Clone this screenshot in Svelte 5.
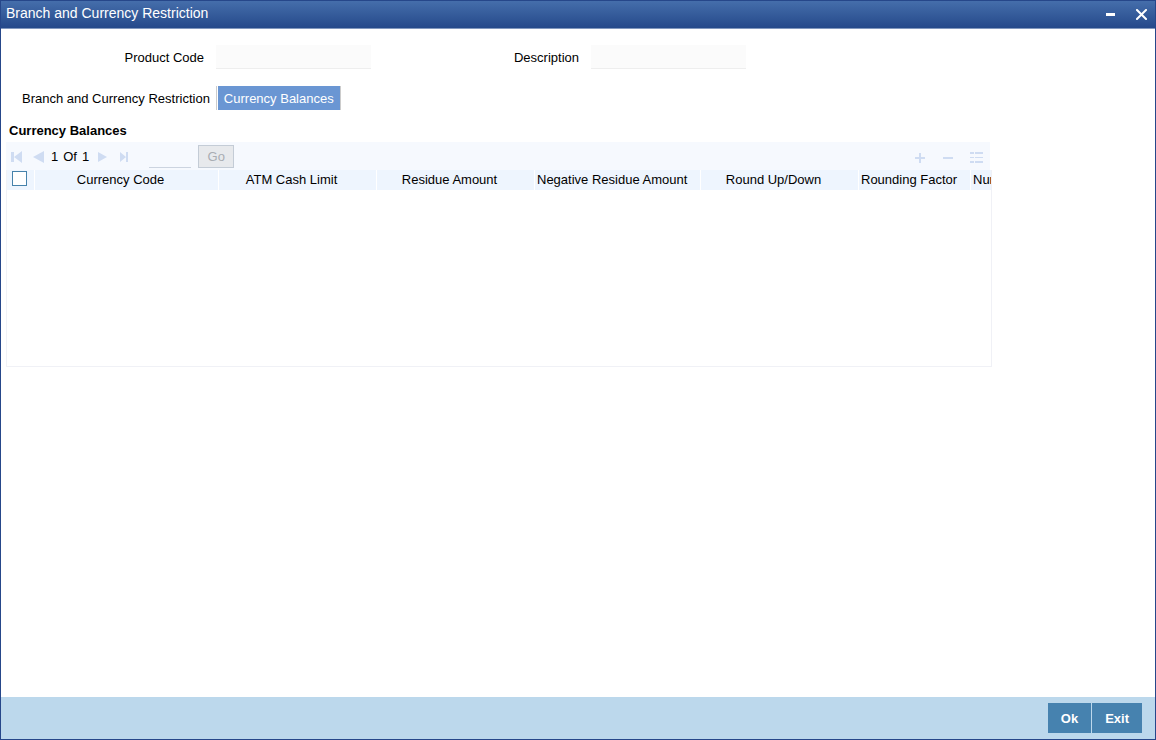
<script>
  const columns = [
    { name: 'Currency Code', width: 184 },
    { name: 'ATM Cash Limit', width: 158 },
    { name: 'Residue Amount', width: 158 },
    { name: 'Negative Residue Amount', width: 166 },
    { name: 'Round Up/Down', width: 158 },
    { name: 'Rounding Factor', width: 112 },
    { name: 'Num', width: 60 }
  ];
</script>

<div class="window">
  <header class="titlebar">
    <h1>Branch and Currency Restriction</h1>
    <div class="window-actions">
      <button type="button" aria-label="Minimize">
        <svg width="11" height="11" viewBox="0 0 11 11"><path d="M1 4h9v3H1z" fill="#fff" /></svg>
      </button>
      <button type="button" aria-label="Close">
        <svg width="11" height="11" viewBox="0 0 11 11"><path d="M1 1l9 9M10 1l-9 9" stroke="#fff" stroke-width="2" stroke-linecap="square" fill="none" /></svg>
      </button>
    </div>
  </header>

  <main>
    <div class="fields">
      <label for="product-code">Product Code</label>
      <input id="product-code" type="text" readonly />
      <label for="description">Description</label>
      <input id="description" type="text" readonly />
    </div>

    <nav class="tabs">
      <a href="#restriction">Branch and Currency Restriction</a>
      <a href="#balances" class="active">Currency Balances</a>
    </nav>

    <section class="balances">
      <h2>Currency Balances</h2>
      <div class="toolbar">
        <button type="button" class="icon" aria-label="First page">
          <svg width="12" height="12" viewBox="0 0 12 12"><path d="M1 1h3v10H1zM12 0v12L4 6z" /></svg>
        </button>
        <button type="button" class="icon" aria-label="Previous page">
          <svg width="12" height="12" viewBox="0 0 12 12"><path d="M12 0v12L1 6z" /></svg>
        </button>
        <span class="page"><span>1</span><span>Of</span><span>1</span></span>
        <button type="button" class="icon" aria-label="Next page">
          <svg width="12" height="12" viewBox="0 0 12 12"><path d="M1 1v10l9-5z" /></svg>
        </button>
        <button type="button" class="icon last" aria-label="Last page">
          <svg width="12" height="12" viewBox="0 0 12 12"><path d="M1 1v10l6-5zM7 1h2v10H7z" /></svg>
        </button>
        <input type="text" class="goto" aria-label="Page number" />
        <button type="button" class="go" disabled>Go</button>
        <div class="row-actions">
          <button type="button" class="icon" aria-label="Add row">
            <svg width="14" height="14" viewBox="0 0 14 14"><path d="M6 3h2v4h4v2H8v4H6V9H2V7h4z" /></svg>
          </button>
          <button type="button" class="icon" aria-label="Remove row">
            <svg width="14" height="14" viewBox="0 0 14 14"><path d="M2 7h10v2H2z" /></svg>
          </button>
          <button type="button" class="icon" aria-label="Single record view">
            <svg width="14" height="14" viewBox="0 0 14 14"><path d="M1 2h4v2H1zM6 2h8v2H6zM1 7h4v1H1zM6 7h8v1H6zM1 11h4v2H1zM6 11h8v2H6z" /></svg>
          </button>
        </div>
      </div>
      <div class="grid">
        <table>
          <colgroup>
            <col class="select-col" />
            {#each columns as column}
              <col style="width: {column.width}px" />
            {/each}
          </colgroup>
          <thead>
            <tr>
              <th class="select"><input type="checkbox" aria-label="Select all" /></th>
              {#each columns as column}
                <th scope="col">{column.name}</th>
              {/each}
            </tr>
          </thead>
        </table>
      </div>
    </section>
  </main>

  <footer>
    <button type="button">Ok</button>
    <button type="button">Exit</button>
  </footer>
</div>

<style>
  :global(body) {
    margin: 0;
    background: #fff;
  }
  .window, .window :where(*) {
    box-sizing: border-box;
  }
  .window {
    display: flex;
    flex-direction: column;
    min-height: 100vh;
    border: 1px solid #26478a;
    font: 13px/16px "Liberation Sans", Arial, sans-serif;
    color: #000;
  }
  button, input {
    margin: 0;
    padding: 0;
    border: 0;
    border-radius: 0;
    background: none;
    font: inherit;
    color: inherit;
  }
  svg {
    display: block;
  }
  .titlebar {
    display: flex;
    justify-content: space-between;
    height: 28px;
    padding: 0 8px 0 5px;
    border-bottom: 1px solid #8197bd;
    background: linear-gradient(#456eab, #25498a);
    color: #fff;
  }
  h1 {
    margin: 0;
    font-size: 14px;
    font-weight: 400;
    line-height: 25px;
  }
  .window-actions {
    display: flex;
    align-items: center;
    gap: 20px;
  }
  main {
    flex: 1;
    padding: 16px 0 0 5px;
  }
  .fields {
    display: grid;
    grid-template-columns: 198px 155px 196px 155px;
    column-gap: 12px;
    align-items: center;
  }
  .fields label {
    padding-top: 2px;
    text-align: right;
  }
  .fields input {
    height: 24px;
    background: #fbfbfb;
    border-bottom: 1px solid #eee;
  }
  .tabs {
    display: flex;
    margin-top: 17px;
    padding-left: 10px;
    line-height: 22px;
  }
  .tabs a {
    padding: 2px 6px 0;
    border-right: 1px solid #ccc;
    color: #000;
    text-decoration: none;
  }
  .tabs .active {
    margin-left: 1px;
    background: #6a96d3;
    color: #fff;
  }
  .balances {
    margin: 13px 163px 0 0;
  }
  h2 {
    margin: 0;
    padding-left: 3px;
    font-size: 13px;
    line-height: 16px;
  }
  .toolbar {
    display: flex;
    align-items: center;
    height: 28px;
    margin: 3px 2px 0 0;
    padding: 3px 7px 1px 4px;
    background: #f6f9fe;
  }
  .icon {
    margin-right: 10px;
    fill: #cfdcf2;
  }
  .page {
    display: flex;
    gap: 5px;
    margin: 0 8px 0 -3px;
  }
  .icon.last {
    margin-right: 18px;
  }
  .goto, .go {
    align-self: flex-start;
    height: 23px;
  }
  .goto {
    width: 42px;
    border-bottom: 1px solid #ccd4e0;
  }
  .go {
    width: 36px;
    margin-left: 7px;
    padding-top: 1px;
    border: 1px solid #c4ccd6;
    background: #e7e9ec;
    color: #a9adb3;
  }
  .row-actions {
    display: flex;
    gap: 14px;
    margin-left: auto;
  }
  .row-actions .icon {
    margin: 0;
  }
  .grid {
    height: 197px;
    overflow: hidden;
    border: 1px solid #f0f1f6;
    border-top: 0;
  }
  table {
    width: 1024px;
    table-layout: fixed;
    border-collapse: separate;
    border-spacing: 0;
  }
  .select-col {
    width: 28px;
  }
  th {
    height: 20px;
    padding: 0 14px 0 2px;
    border-right: 1px solid #fff;
    background: #eef5fe;
    font-weight: 400;
    white-space: nowrap;
  }
  th.select {
    padding: 1px 2px 0 0;
    vertical-align: top;
  }
  th:last-child {
    padding: 0 2px;
    text-align: left;
  }
  input[type="checkbox"] {
    display: block;
    appearance: none;
    width: 15px;
    height: 15px;
    margin: 0 auto;
    border: 1px solid #4682ab;
    background: #fff;
  }
  footer {
    display: flex;
    justify-content: flex-end;
    gap: 1px;
    padding: 6px 13px;
    background: #bcd8ec;
  }
  footer button {
    height: 30px;
    padding: 2px 13px 0;
    background: #4682af;
    color: #fff;
    font-weight: 700;
  }
</style>
